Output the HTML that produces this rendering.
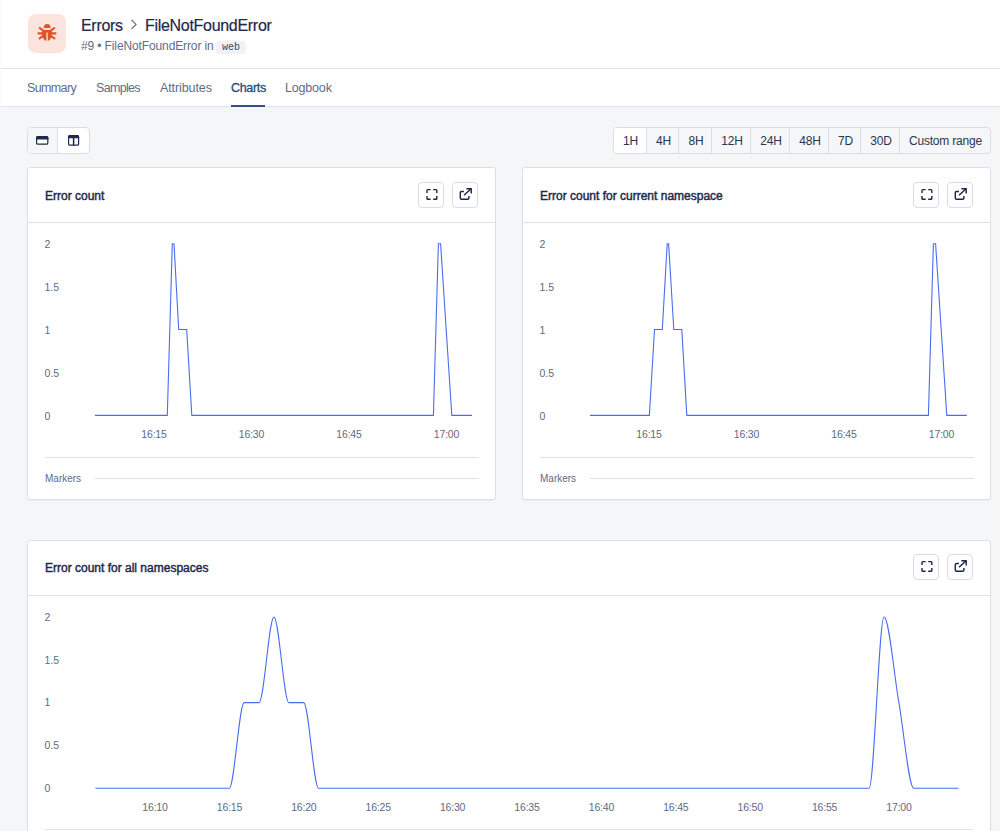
<!DOCTYPE html>
<html><head><meta charset="utf-8">
<style>
html,body{margin:0;padding:0;}
body{width:1000px;height:831px;overflow:hidden;position:relative;background:#f5f6f8;font-family:"Liberation Sans",sans-serif;color:#1d2a4a;}
.a{position:absolute;}
.t{position:absolute;white-space:nowrap;line-height:1;}
#hdr{left:0;top:0;width:1000px;height:68px;background:#fff;border-bottom:1px solid #dfe2ea;}
#tabs{left:0;top:69px;width:1000px;height:37px;background:#fff;border-bottom:1px solid #dfe2ea;}
.tab{font-size:12.5px;color:#5f6c89;top:13px;}
.grp{position:absolute;border:1px solid #dadde7;border-radius:4px;background:#f5f6f8;overflow:hidden;box-sizing:border-box;}
.seg{position:absolute;top:0;bottom:0;border-left:1px solid #dadde7;margin-left:-1px;}
.btxt{position:absolute;top:7px;font-size:12px;line-height:1;color:#2a3551;text-align:center;white-space:nowrap;letter-spacing:-0.2px;}
.card{position:absolute;background:#fff;border:1px solid #dcdfe9;border-radius:3px;box-sizing:border-box;box-shadow:0 1px 0 rgba(20,30,60,0.03);}
.ctitle{font-size:12px;color:#1d2a4a;-webkit-text-stroke:0.45px #1d2a4a;}
.ib{position:absolute;width:26px;height:26px;box-sizing:border-box;border:1px solid #d9dce6;border-radius:4px;background:#fff;}
.yl{position:absolute;font-size:10.5px;line-height:1;color:#5d6a87;white-space:nowrap;}
.xl{position:absolute;font-size:10.5px;line-height:1;color:#5d6a87;white-space:nowrap;letter-spacing:-0.2px;text-align:center;width:40px;}
.hl{position:absolute;height:1px;background:#dde1ec;}
</style></head><body>

<div class="a" style="left:0;top:1px;width:1px;height:106px;background:#fafafb;z-index:5"></div>
<div id="hdr" class="a">
  <div class="a" style="left:28px;top:14px;width:38px;height:39px;border-radius:8px;background:#fbe4de;"></div>
  <svg class="a" style="left:37px;top:23px" width="21" height="19" viewBox="0 0 21 19">
    <path d="M6.7,5.1 A3.45,4.2 0 0 1 13.6,5.1 Z" fill="#e0532b"/>
    <path d="M5.1,6.9 H14.9 V11 C14.9,15 12.5,17.9 10,17.9 C7.5,17.9 5.1,15 5.1,11 Z" fill="#e0532b"/>
    <rect x="9.35" y="9.6" width="1.4" height="9" fill="#fbe4de"/>
    <g stroke="#e0532b" stroke-width="2.1" stroke-linecap="round">
      <line x1="2.8" y1="5.2" x2="6" y2="7.4"/>
      <line x1="17.2" y1="5.2" x2="14" y2="7.4"/>
      <line x1="1.5" y1="10.4" x2="5.5" y2="10.4"/>
      <line x1="18.5" y1="10.4" x2="14.5" y2="10.4"/>
      <line x1="2.6" y1="15.4" x2="5.8" y2="13.2"/>
      <line x1="17.4" y1="15.4" x2="14.2" y2="13.2"/>
    </g>
  </svg>
  <div class="t" style="left:81px;top:17.5px;font-size:16px;letter-spacing:-0.3px;color:#1d2a4a;-webkit-text-stroke:0.2px #1d2a4a;">Errors</div>
  <svg class="a" style="left:129px;top:18px" width="10" height="13" viewBox="0 0 10 13">
    <path d="M2.5,1.8 L7,6.4 L2.5,11" fill="none" stroke="#6a7692" stroke-width="1.3"/>
  </svg>
  <div class="t" style="left:145px;top:17.5px;font-size:16px;letter-spacing:-0.3px;color:#1d2a4a;-webkit-text-stroke:0.2px #1d2a4a;">FileNotFoundError</div>
  <div class="t" style="left:81px;top:40px;font-size:12px;color:#5f6c89;letter-spacing:-0.12px;">#9 &bull; FileNotFoundError in</div>
  <div class="a" style="left:216px;top:41px;width:30px;height:13px;border-radius:3px;background:#f1f2f6;"></div>
  <div class="t" style="left:222px;top:42.5px;font-size:10px;font-family:'Liberation Mono',monospace;color:#3a4560;">web</div>
</div>

<div id="tabs" class="a">
  <div class="t tab" style="left:27px;letter-spacing:-0.63px;">Summary</div>
  <div class="t tab" style="left:96px;letter-spacing:-0.68px;">Samples</div>
  <div class="t tab" style="left:160px;letter-spacing:-0.1px;">Attributes</div>
  <div class="t tab" style="left:231px;letter-spacing:-0.32px;color:#2b4a7e;-webkit-text-stroke:0.3px #2b4a7e;">Charts</div>
  <div class="t tab" style="left:285px;letter-spacing:-0.18px;">Logbook</div>
  <div class="a" style="left:231px;top:36px;width:34px;height:2px;background:#30508a;"></div>
</div>

<!-- layout toggles -->
<div class="grp" style="left:27px;top:127px;width:63px;height:27px;background:#fff;">
  <div class="a" style="left:0;top:0;width:30px;height:25px;background:#f5f6f8;"></div>
  <div class="seg" style="left:30px;"></div>
  <svg class="a" style="left:8.4px;top:8px" width="13" height="9" viewBox="0 0 13 9">
    <rect x="0.6" y="0.6" width="11.2" height="7.6" rx="1.3" fill="#fff" stroke="#1d2a4a" stroke-width="1.2"/>
    <path d="M0,3.6 V1.9 A1.9,1.9 0 0 1 1.9,0 H10.5 A1.9,1.9 0 0 1 12.4,1.9 V3.6 Z" fill="#1d2a4a"/>
  </svg>
  <svg class="a" style="left:40.4px;top:7px" width="12" height="11" viewBox="0 0 12 11">
    <rect x="0.6" y="0.6" width="10" height="9.6" rx="1.3" fill="#fff" stroke="#1d2a4a" stroke-width="1.2"/>
    <path d="M0,3.2 V1.9 A1.9,1.9 0 0 1 1.9,0 H9.3 A1.9,1.9 0 0 1 11.2,1.9 V3.2 Z" fill="#1d2a4a"/>
    <rect x="4.85" y="2" width="1.5" height="8.5" fill="#1d2a4a"/>
  </svg>
</div>

<!-- time range -->
<div class="grp" style="left:613px;top:127px;width:378px;height:27px;">
  <div class="a" style="left:0;top:0;width:33px;height:25px;background:#fff;"></div>
  <div class="seg" style="left:33px;"></div>
  <div class="seg" style="left:65px;"></div>
  <div class="seg" style="left:98px;"></div>
  <div class="seg" style="left:137px;"></div>
  <div class="seg" style="left:176px;"></div>
  <div class="seg" style="left:215px;"></div>
  <div class="seg" style="left:247px;"></div>
  <div class="seg" style="left:286px;"></div>
  <div class="btxt" style="left:0;width:33px;">1H</div>
  <div class="btxt" style="left:34px;width:31px;">4H</div>
  <div class="btxt" style="left:66px;width:32px;">8H</div>
  <div class="btxt" style="left:99px;width:38px;">12H</div>
  <div class="btxt" style="left:138px;width:38px;">24H</div>
  <div class="btxt" style="left:177px;width:38px;">48H</div>
  <div class="btxt" style="left:216px;width:31px;">7D</div>
  <div class="btxt" style="left:248px;width:38px;">30D</div>
  <div class="btxt" style="left:287px;width:89px;">Custom range</div>
</div>

<!-- card 1 -->
<div class="card" style="left:27px;top:167px;width:469px;height:333px;"></div>
<div class="hl" style="left:28px;top:222px;width:467px;"></div>
<div class="t ctitle" style="left:45px;top:190px;">Error count</div>

<!-- card 2 -->
<div class="card" style="left:522px;top:167px;width:469px;height:333px;"></div>
<div class="hl" style="left:523px;top:222px;width:467px;"></div>
<div class="t ctitle" style="left:540px;top:190px;">Error count for current namespace</div>

<!-- card 3 -->
<div class="card" style="left:27px;top:540px;width:964px;height:320px;"></div>
<div class="hl" style="left:28px;top:595px;width:962px;"></div>
<div class="t ctitle" style="left:45px;top:562px;">Error count for all namespaces</div>

<div class="ib" style="left:418px;top:182px;"><div class="a" style="left:-0.9px;top:-0.9px"><svg class="a" style="left:0;top:0" width="26" height="26" viewBox="0 0 26 26"><g fill="none" stroke="#1b2646" stroke-width="1.4" stroke-linecap="butt">
<path d="M9,10.9 V8.4 Q9,7.6 9.8,7.6 H12.6"/><path d="M15.2,7.6 H18 Q18.8,7.6 18.8,8.4 V10.9"/>
<path d="M9,14 V16.4 Q9,17.2 9.8,17.2 H12.6"/><path d="M15.2,17.2 H18 Q18.8,17.2 18.8,16.4 V14"/></g></svg></div></div><div class="ib" style="left:452px;top:182px;"><div class="a" style="left:-1.3px;top:-1px"><svg class="a" style="left:0;top:0" width="26" height="26" viewBox="0 0 26 26"><g fill="none" stroke="#1b2646" stroke-width="1.45" stroke-linecap="butt" stroke-linejoin="round">
<path d="M11.9,9.4 H9.5 Q8.3,9.4 8.3,10.6 V16.1 Q8.3,17.3 9.5,17.3 H15.7 Q16.9,17.3 16.9,16.1 V14"/>
<path d="M12,13.3 L19.1,6.7"/><path d="M14.4,6.8 H19.2 V11.6"/></g></svg></div></div><div class="ib" style="left:913px;top:182px;"><div class="a" style="left:-0.9px;top:-0.9px"><svg class="a" style="left:0;top:0" width="26" height="26" viewBox="0 0 26 26"><g fill="none" stroke="#1b2646" stroke-width="1.4" stroke-linecap="butt">
<path d="M9,10.9 V8.4 Q9,7.6 9.8,7.6 H12.6"/><path d="M15.2,7.6 H18 Q18.8,7.6 18.8,8.4 V10.9"/>
<path d="M9,14 V16.4 Q9,17.2 9.8,17.2 H12.6"/><path d="M15.2,17.2 H18 Q18.8,17.2 18.8,16.4 V14"/></g></svg></div></div><div class="ib" style="left:947px;top:182px;"><div class="a" style="left:-1.3px;top:-1px"><svg class="a" style="left:0;top:0" width="26" height="26" viewBox="0 0 26 26"><g fill="none" stroke="#1b2646" stroke-width="1.45" stroke-linecap="butt" stroke-linejoin="round">
<path d="M11.9,9.4 H9.5 Q8.3,9.4 8.3,10.6 V16.1 Q8.3,17.3 9.5,17.3 H15.7 Q16.9,17.3 16.9,16.1 V14"/>
<path d="M12,13.3 L19.1,6.7"/><path d="M14.4,6.8 H19.2 V11.6"/></g></svg></div></div><div class="ib" style="left:913px;top:554px;"><div class="a" style="left:-0.9px;top:-0.9px"><svg class="a" style="left:0;top:0" width="26" height="26" viewBox="0 0 26 26"><g fill="none" stroke="#1b2646" stroke-width="1.4" stroke-linecap="butt">
<path d="M9,10.9 V8.4 Q9,7.6 9.8,7.6 H12.6"/><path d="M15.2,7.6 H18 Q18.8,7.6 18.8,8.4 V10.9"/>
<path d="M9,14 V16.4 Q9,17.2 9.8,17.2 H12.6"/><path d="M15.2,17.2 H18 Q18.8,17.2 18.8,16.4 V14"/></g></svg></div></div><div class="ib" style="left:947px;top:554px;"><div class="a" style="left:-1.3px;top:-1px"><svg class="a" style="left:0;top:0" width="26" height="26" viewBox="0 0 26 26"><g fill="none" stroke="#1b2646" stroke-width="1.45" stroke-linecap="butt" stroke-linejoin="round">
<path d="M11.9,9.4 H9.5 Q8.3,9.4 8.3,10.6 V16.1 Q8.3,17.3 9.5,17.3 H15.7 Q16.9,17.3 16.9,16.1 V14"/>
<path d="M12,13.3 L19.1,6.7"/><path d="M14.4,6.8 H19.2 V11.6"/></g></svg></div></div>
<div class="yl" style="left:44.5px;top:238.85px;">2</div><div class="yl" style="left:44.5px;top:281.86px;">1.5</div><div class="yl" style="left:44.5px;top:324.86px;">1</div><div class="yl" style="left:44.5px;top:367.86px;">0.5</div><div class="yl" style="left:44.5px;top:410.86px;">0</div><div class="xl" style="left:134.00px;top:428.86px;">16:15</div><div class="xl" style="left:231.50px;top:428.86px;">16:30</div><div class="xl" style="left:329.00px;top:428.86px;">16:45</div><div class="xl" style="left:426.50px;top:428.86px;">17:00</div><div class="hl" style="left:45px;top:457px;width:434px;"></div><div class="t" style="left:45px;top:473.5px;font-size:10px;color:#5d6a87;letter-spacing:0px;">Markers</div><div class="hl" style="left:95px;top:478px;width:384px;"></div><div class="yl" style="left:539.5px;top:238.85px;">2</div><div class="yl" style="left:539.5px;top:281.86px;">1.5</div><div class="yl" style="left:539.5px;top:324.86px;">1</div><div class="yl" style="left:539.5px;top:367.86px;">0.5</div><div class="yl" style="left:539.5px;top:410.86px;">0</div><div class="xl" style="left:629.00px;top:428.86px;">16:15</div><div class="xl" style="left:726.50px;top:428.86px;">16:30</div><div class="xl" style="left:824.00px;top:428.86px;">16:45</div><div class="xl" style="left:921.50px;top:428.86px;">17:00</div><div class="hl" style="left:540px;top:457px;width:434px;"></div><div class="t" style="left:540px;top:473.5px;font-size:10px;color:#5d6a87;letter-spacing:0px;">Markers</div><div class="hl" style="left:590px;top:478px;width:384px;"></div><div class="yl" style="left:44.5px;top:611.65px;">2</div><div class="yl" style="left:44.5px;top:655.06px;">1.5</div><div class="yl" style="left:44.5px;top:697.15px;">1</div><div class="yl" style="left:44.5px;top:739.96px;">0.5</div><div class="yl" style="left:44.5px;top:782.56px;">0</div><div class="xl" style="left:135.00px;top:801.86px;">16:10</div><div class="xl" style="left:209.40px;top:801.86px;">16:15</div><div class="xl" style="left:283.80px;top:801.86px;">16:20</div><div class="xl" style="left:358.20px;top:801.86px;">16:25</div><div class="xl" style="left:432.60px;top:801.86px;">16:30</div><div class="xl" style="left:507.00px;top:801.86px;">16:35</div><div class="xl" style="left:581.40px;top:801.86px;">16:40</div><div class="xl" style="left:655.80px;top:801.86px;">16:45</div><div class="xl" style="left:730.20px;top:801.86px;">16:50</div><div class="xl" style="left:804.60px;top:801.86px;">16:55</div><div class="xl" style="left:879.00px;top:801.86px;">17:00</div><div class="hl" style="left:45px;top:829px;width:928px;"></div>

<svg class="a" style="left:0;top:0" width="1000" height="831" viewBox="0 0 1000 831">
  <g fill="none" stroke="#4a6cf0" stroke-width="1.1">
    <path d="M95.00,415.40 L167.30,415.40 L172.30,243.70 L174.00,243.70 L178.70,329.55 L186.70,329.55 L191.80,415.40 L433.40,415.40 L438.40,243.70 L440.60,243.70 L451.80,415.40 L471.90,415.40"/>
    <path transform="translate(495,0)" d="M95.00,415.40 L154.40,415.40 L159.50,329.55 L167.30,329.55 L172.20,243.70 L173.60,243.70 L178.80,329.55 L186.80,329.55 L191.80,415.40 L433.40,415.40 L438.40,243.70 L440.60,243.70 L451.80,415.40 L471.90,415.40"/>
    <path d="M95.38,788.20C100.34,788.20,105.30,788.20,110.26,788.20C115.22,788.20,120.18,788.20,125.14,788.20C130.10,788.20,135.06,788.20,140.02,788.20C144.98,788.20,149.94,788.20,154.90,788.20C159.86,788.20,164.82,788.20,169.78,788.20C174.74,788.20,179.70,788.20,184.66,788.20C189.62,788.20,194.58,788.20,199.54,788.20C204.50,788.20,209.46,788.20,214.42,788.20C219.38,788.20,224.34,788.20,229.30,788.20C234.26,788.20,239.22,702.60,244.18,702.60C249.14,702.60,254.10,702.60,259.06,702.60C264.02,702.60,268.98,617.00,273.94,617.00C278.90,617.00,283.86,702.60,288.82,702.60C293.78,702.60,298.74,702.60,303.70,702.60C308.66,702.60,313.62,788.20,318.58,788.20C323.54,788.20,328.50,788.20,333.46,788.20C338.42,788.20,343.38,788.20,348.34,788.20C353.30,788.20,358.26,788.20,363.22,788.20C368.18,788.20,373.14,788.20,378.10,788.20C383.06,788.20,388.02,788.20,392.98,788.20C397.94,788.20,402.90,788.20,407.86,788.20C412.82,788.20,417.78,788.20,422.74,788.20C427.70,788.20,432.66,788.20,437.62,788.20C442.58,788.20,447.54,788.20,452.50,788.20C457.46,788.20,462.42,788.20,467.38,788.20C472.34,788.20,477.30,788.20,482.26,788.20C487.22,788.20,492.18,788.20,497.14,788.20C502.10,788.20,507.06,788.20,512.02,788.20C516.98,788.20,521.94,788.20,526.90,788.20C531.86,788.20,536.82,788.20,541.78,788.20C546.74,788.20,551.70,788.20,556.66,788.20C561.62,788.20,566.58,788.20,571.54,788.20C576.50,788.20,581.46,788.20,586.42,788.20C591.38,788.20,596.34,788.20,601.30,788.20C606.26,788.20,611.22,788.20,616.18,788.20C621.14,788.20,626.10,788.20,631.06,788.20C636.02,788.20,640.98,788.20,645.94,788.20C650.90,788.20,655.86,788.20,660.82,788.20C665.78,788.20,670.74,788.20,675.70,788.20C680.66,788.20,685.62,788.20,690.58,788.20C695.54,788.20,700.50,788.20,705.46,788.20C710.42,788.20,715.38,788.20,720.34,788.20C725.30,788.20,730.26,788.20,735.22,788.20C740.18,788.20,745.14,788.20,750.10,788.20C755.06,788.20,760.02,788.20,764.98,788.20C769.94,788.20,774.90,788.20,779.86,788.20C784.82,788.20,789.78,788.20,794.74,788.20C799.70,788.20,804.66,788.20,809.62,788.20C814.58,788.20,819.54,788.20,824.50,788.20C829.46,788.20,834.42,788.20,839.38,788.20C844.34,788.20,849.30,788.20,854.26,788.20C859.22,788.20,864.18,788.20,869.14,788.20C874.10,788.20,879.06,617.00,884.02,617.00C888.98,617.00,893.94,674.07,898.90,702.60C903.86,731.13,908.82,788.20,913.78,788.20C918.74,788.20,923.70,788.20,928.66,788.20C933.62,788.20,938.58,788.20,943.54,788.20C948.50,788.20,953.46,788.20,958.42,788.20"/>
  </g>
</svg>

</body></html>
